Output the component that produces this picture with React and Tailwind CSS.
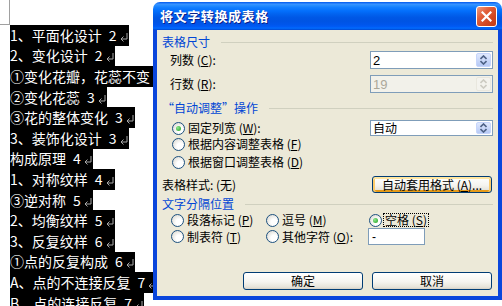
import React from 'react';

const docLines = [
  ['1、平面化设计', '2'],
  ['2、变化设计', '2'],
  ['①变化花瓣，花蕊不变', '3'],
  ['②变化花蕊', '3'],
  ['③花的整体变化', '3'],
  ['3、装饰化设计', '3'],
  ['构成原理', '4'],
  ['1、对称纹样', '4'],
  ['③逆对称', '5'],
  ['2、均衡纹样', '5'],
  ['3、反复纹样', '6'],
  ['①点的反复构成', '6'],
  ['A、点的不连接反复', '7'],
  ['B、点的连接反复', '7'],
];

function ReturnMark() {
  return (
    <svg width="10" height="10" viewBox="0 0 10 10" className="ml-[2px] mt-[3px]">
      <path d="M8 1 V7 H2" fill="none" stroke="#a8a8a8" strokeWidth="1" />
      <path d="M4.5 4.5 L2 7 L4.5 9.5" fill="none" stroke="#a8a8a8" strokeWidth="1" />
    </svg>
  );
}

function U({ children }) {
  return <span className="underline underline-offset-[1px]">{children}</span>;
}

function Radio({ checked }) {
  return (
    <span className="w-[13px] h-[13px] shrink-0 rounded-full border border-[#1C5180] bg-[radial-gradient(circle_at_65%_65%,#ffffff_30%,#d3d0c6_100%)] flex items-center justify-center">
      {checked && (
        <span className="w-[5px] h-[5px] rounded-full bg-[radial-gradient(circle_at_35%_35%,#8ee88e,#1f9e1f)]" />
      )}
    </span>
  );
}

function Arrows({ disabled }) {
  const c = disabled ? '#cdcbc2' : '#4d6185';
  return (
    <svg width="7" height="10" viewBox="0 0 7 10">
      <path d="M0.5 4 L3.5 1 L6.5 4" fill="none" stroke={c} strokeWidth="1.6" />
      <path d="M0.5 6 L3.5 9 L6.5 6" fill="none" stroke={c} strokeWidth="1.6" />
    </svg>
  );
}

function SpinBox({ value, disabled, className = '' }) {
  return (
    <div
      className={`h-full flex items-center border border-[#7F9DB9] ${
        disabled ? 'bg-[#f2f1ea] text-[#aca899]' : 'bg-white text-black'
      } ${className}`}
    >
      <span className="flex-1 pl-[2px] font-['Liberation_Sans'] text-[13px]">{value}</span>
      <span
        className={`w-[15px] h-[calc(100%-2px)] mr-[1px] rounded-[2px] flex items-center justify-center border ${
          disabled
            ? 'bg-[#f4f3ee] border-[#e9e7de]'
            : 'bg-[linear-gradient(180deg,#dfe8fd,#b6c9f5)] border-[#c6d5fb]'
        }`}
      >
        <Arrows disabled={disabled} />
      </span>
    </div>
  );
}

function Header({ title, className = '' }) {
  return (
    <div className={`h-[14px] flex items-center ${className}`}>
      <span className="text-[#0046D5]">{title}</span>
      <span className="flex-1 ml-[11px] h-px bg-[#d0d0bf]" />
    </div>
  );
}

function XpButton({ children, hot }) {
  return (
    <div
      className={`w-[120px] h-full rounded-[3px] border border-[#003C74] bg-[linear-gradient(180deg,#ffffff_0%,#f5f4ef_55%,#e6e3d9_88%,#d6d0c5_100%)] flex items-center justify-center ${
        hot
          ? 'shadow-[inset_0_2px_0_#ffe6a0,inset_2px_0_0_#fbcb6c,inset_-2px_0_0_#fbcb6c,inset_0_-2px_0_#e59b1b]'
          : ''
      }`}
    >
      {children}
    </div>
  );
}

function CloseButton() {
  return (
    <div className="w-[21px] h-[21px] rounded-[3px] border border-white bg-[linear-gradient(135deg,#ee9c80_0%,#e2603b_35%,#cf4520_70%,#c33d18_100%)] flex items-center justify-center">
      <svg width="11" height="11" viewBox="0 0 11 11">
        <path d="M1.5 1.5 L9.5 9.5 M9.5 1.5 L1.5 9.5" stroke="#fff" strokeWidth="2.2" strokeLinecap="square" />
      </svg>
    </div>
  );
}

function Dialog() {
  return (
    <div className="absolute left-[153px] top-[2px] w-[349px] h-[298px] flex flex-col font-['Noto_Sans_CJK_SC',sans-serif] text-[12px] text-black">
      <div className="h-[28px] shrink-0 rounded-t-[7px] bg-[linear-gradient(180deg,#0058EE_0%,#3A93FF_8%,#288EFF_12%,#127DFF_20%,#036FFC_32%,#0262EE_44%,#0057E5_56%,#0054E3_68%,#0055EB_80%,#005BF5_88%,#026AFE_93%,#0062EF_96%,#0043CF_100%)] flex items-center pl-[7px] pr-[5px]">
        <span className="text-white font-bold text-[13px] tracking-[0.6px] [text-shadow:1px_1px_0_#0a1f8a]">
          将文字转换成表格
        </span>
        <span className="ml-auto">
          <CloseButton />
        </span>
      </div>
      <div className="flex-1 border-x-4 border-b-4 border-[#0A46DC] bg-[#ECE9D8] flex flex-col pl-[5px] pr-[5px] pt-[5px] leading-none">
        <Header title="表格尺寸" />
        <div className="mt-[2px] h-[18px] flex items-center">
          <span className="ml-[8px]">
            列数 (<U>C</U>):
          </span>
          <SpinBox value="2" className="ml-auto w-[123px]" />
        </div>
        <div className="mt-[6px] h-[18px] flex items-center">
          <span className="ml-[8px]">
            行数 (<U>R</U>):
          </span>
          <SpinBox value="19" disabled className="ml-auto w-[123px]" />
        </div>
        <Header title="“自动调整”操作" className="mt-[8px]" />
        <div className="mt-[5px] h-[16px] flex items-center pl-[10px]">
          <Radio checked />
          <span className="ml-[3px]">
            固定列宽 (<U>W</U>):
          </span>
          <SpinBox value="自动" className="ml-auto w-[123px] [&>span:first-child]:font-['Noto_Sans_CJK_SC'] [&>span:first-child]:text-[12px]" />
        </div>
        <div className="h-[16px] flex items-center pl-[10px]">
          <Radio />
          <span className="ml-[3px]">
            根据内容调整表格 (<U>F</U>)
          </span>
        </div>
        <div className="mt-[2px] h-[16px] flex items-center pl-[10px]">
          <Radio />
          <span className="ml-[3px]">
            根据窗口调整表格 (<U>D</U>)
          </span>
        </div>
        <div className="mt-[6px] h-[17px] flex items-center">
          <span>表格样式: (无)</span>
          <span className="ml-auto mr-px h-full">
            <XpButton hot>
              自动套用格式 (<U>A</U>)...
            </XpButton>
          </span>
        </div>
        <Header title="文字分隔位置" className="mt-[4px]" />
        <div className="mt-[1px] h-[16px] flex items-center pl-[9px]">
          <div className="w-[95px] flex items-center">
            <Radio />
            <span className="ml-[3px]">
              段落标记 (<U>P</U>)
            </span>
          </div>
          <div className="w-[103px] flex items-center">
            <Radio />
            <span className="ml-[3px]">
              逗号 (<U>M</U>)
            </span>
          </div>
          <div className="flex items-center">
            <Radio checked />
            <span className="ml-[1px] px-[1px] border border-dotted border-black">
              空格 (<U>S</U>)
            </span>
          </div>
        </div>
        <div className="h-[17px] flex items-center pl-[9px]">
          <div className="w-[95px] flex items-center">
            <Radio />
            <span className="ml-[3px]">
              制表符 (<U>T</U>)
            </span>
          </div>
          <div className="w-[102px] flex items-center">
            <Radio />
            <span className="ml-[3px]">
              其他字符 (<U>O</U>):
            </span>
          </div>
          <div className="w-[57px] h-full border border-[#7F9DB9] bg-white flex items-center pl-[3px] font-['Liberation_Sans'] text-[12px]">
            -
          </div>
        </div>
        <div className="mt-[27px] h-[18px] flex justify-end gap-[9px] pr-px">
          <XpButton>确定</XpButton>
          <XpButton>取消</XpButton>
        </div>
      </div>
    </div>
  );
}

export default function App() {
  return (
    <div className="relative w-[502px] h-[306px] overflow-hidden bg-white">
      <div className="w-[10px] h-[25px] border-r border-b border-[#a0a0a0]" />
      <div className="pl-[10px] font-['Noto_Sans_CJK_SC',sans-serif] text-[14px] text-white">
        {docLines.map(([label, page]) => (
          <div key={label} className="w-fit h-[20.6px] bg-black flex items-center whitespace-nowrap">
            <span>{label}</span>
            <span className="ml-[7px]">{page}</span>
            <ReturnMark />
          </div>
        ))}
      </div>
      <Dialog />
    </div>
  );
}
